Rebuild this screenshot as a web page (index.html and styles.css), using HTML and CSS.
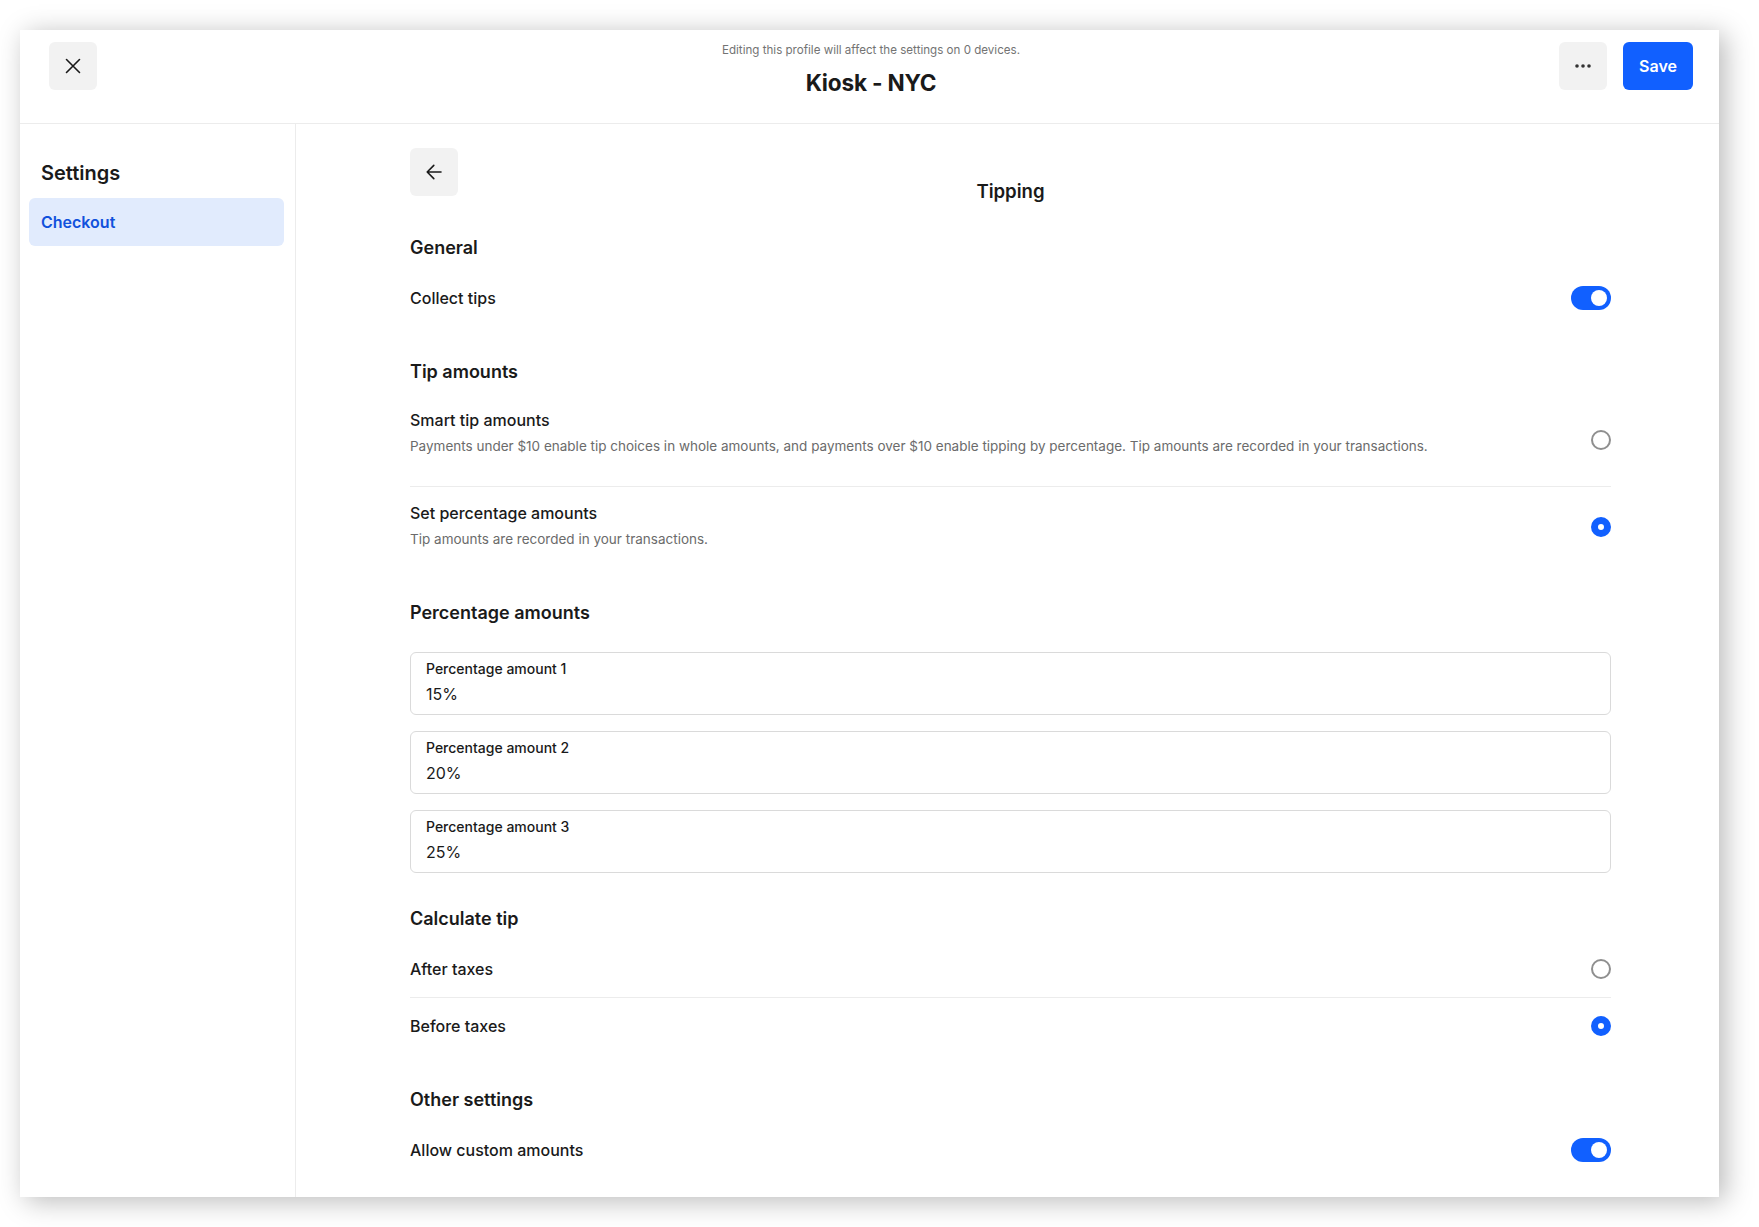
FILE: index.html
```html
<!DOCTYPE html>
<html lang="en">
<head>
  <meta charset="UTF-8" />
  <meta name="viewport" content="width=device-width, initial-scale=1.0"/>
  <title>Kiosk - NYC · Tipping</title>
  <link rel="stylesheet" href="styles.css">
</head>
<body>
  <div class="page">
    <div class="window">
      <header class="topbar">
        <div class="topbar-left">
          <button class="icon-btn" aria-label="Close">
            <svg width="16" height="16" viewBox="0 0 16 16"><path d="M1.5 1.5l13 13M14.5 1.5l-13 13" stroke="#1a1a1a" stroke-width="1.6" fill="none" stroke-linecap="round"/></svg>
          </button>
        </div>
        <div class="topbar-title">
          <div class="topbar-note">Editing this profile will affect the settings on 0 devices.</div>
          <h1>Kiosk - NYC</h1>
        </div>
        <div class="topbar-actions">
          <button class="icon-btn" aria-label="More">
            <svg width="16" height="4" viewBox="0 0 16 4"><circle cx="2" cy="2" r="1.8" fill="#333"/><circle cx="8" cy="2" r="1.8" fill="#333"/><circle cx="14" cy="2" r="1.8" fill="#333"/></svg>
          </button>
          <button class="save-btn">Save</button>
        </div>
      </header>

      <div class="layout">
        <aside class="sidebar">
          <h2>Settings</h2>
          <a class="nav-item active" href="#">Checkout</a>
        </aside>

        <main class="main">
          <div class="page-head">
            <button class="icon-btn" aria-label="Back">
              <svg width="16" height="16" viewBox="0 0 16 16"><path d="M15 8H1.2M7.8 1.4L1.2 8l6.6 6.6" stroke="#1a1a1a" stroke-width="1.6" fill="none" stroke-linecap="round" stroke-linejoin="round"/></svg>
            </button>
            <h2 class="page-title">Tipping</h2>
          </div>

          <section class="group">
            <h3>General</h3>
            <div class="row">
              <span class="row-title">Collect tips</span>
              <span class="toggle on"></span>
            </div>
          </section>

          <section class="group">
            <h3>Tip amounts</h3>
            <div class="row option first">
              <div class="option-text">
                <div class="row-title">Smart tip amounts</div>
                <div class="row-desc">Payments under $10 enable tip choices in whole amounts, and payments over $10 enable tipping by percentage. Tip amounts are recorded in your transactions.</div>
              </div>
              <span class="radio"></span>
            </div>
            <div class="row option">
              <div class="option-text">
                <div class="row-title">Set percentage amounts</div>
                <div class="row-desc">Tip amounts are recorded in your transactions.</div>
              </div>
              <span class="radio checked"></span>
            </div>
          </section>

          <section class="group">
            <h3>Percentage amounts</h3>
            <div class="fields">
              <div class="field">
                <div class="field-label">Percentage amount 1</div>
                <div class="field-value">15%</div>
              </div>
              <div class="field">
                <div class="field-label">Percentage amount 2</div>
                <div class="field-value">20%</div>
              </div>
              <div class="field">
                <div class="field-label">Percentage amount 3</div>
                <div class="field-value">25%</div>
              </div>
            </div>
          </section>

          <section class="group">
            <h3>Calculate tip</h3>
            <div class="row">
              <span class="row-title">After taxes</span>
              <span class="radio"></span>
            </div>
            <div class="row divided">
              <span class="row-title">Before taxes</span>
              <span class="radio checked"></span>
            </div>
          </section>

          <section class="group">
            <h3>Other settings</h3>
            <div class="row">
              <span class="row-title">Allow custom amounts</span>
              <span class="toggle on"></span>
            </div>
          </section>
        </main>
      </div>
    </div>
  </div>
</body>
</html>
```

FILE: styles.css
```css
* { box-sizing: border-box; }
body { margin: 0; background: #fff; font-family: Inter, "Noto Sans", sans-serif; color: #1a1a1a; }
h1, h2, h3 { margin: 0; }
button { font-family: inherit; border: none; cursor: pointer; padding: 0; }

.page { padding: 30px 40px 30px 20px; }
.window {
  height: 1167px;
  background: #fff;
  overflow: hidden;
  box-shadow: 6px 4px 26px rgba(0, 0, 0, 0.28);
}

/* top bar */
.topbar {
  display: grid;
  grid-template-columns: 1fr auto 1fr;
  align-items: start;
  height: 94px;
  padding: 12px 26px 0 29px;
  border-bottom: 1px solid #ececec;
}
.topbar-title { text-align: center; }
.topbar-note { font-size: 11.6px; line-height: 16px; color: #737373; }
.topbar-title h1 { margin-top: 11px; font-size: 22.6px; line-height: 28px; font-weight: 700; letter-spacing: -0.2px; }
.topbar-actions { display: flex; justify-content: flex-end; gap: 16px; }

.icon-btn {
  width: 48px;
  height: 48px;
  border-radius: 6px;
  background: #f2f2f2;
  display: flex;
  align-items: center;
  justify-content: center;
}
.save-btn {
  height: 48px;
  padding: 0 16px;
  border-radius: 6px;
  background: #1160ff;
  color: #fff;
  font-size: 16px;
  font-weight: 600;
}

/* body */
.layout { display: flex; height: 1073px; }
.sidebar {
  width: 276px;
  flex-shrink: 0;
  border-right: 1px solid #ececec;
  padding: 35px 11px 0 9px;
}
.sidebar h2 { font-size: 20px; line-height: 28px; font-weight: 600; padding-left: 12px; margin-bottom: 11px; }
.nav-item {
  display: flex;
  align-items: center;
  height: 48px;
  padding: 0 12px;
  border-radius: 6px;
  font-size: 16px;
  font-weight: 600;
  color: #1151dc;
  text-decoration: none;
}
.nav-item.active { background: #e1ebfd; }

.main { flex: 1; padding: 24px 108px 0 114px; }
.page-head {
  display: grid;
  grid-template-columns: 48px 1fr 48px;
  height: 54px;
}
.page-title { align-self: end; margin-bottom: -1px; text-align: center; font-size: 18.6px; line-height: 24px; font-weight: 600; }

.group { margin-top: 32px; }
.group h3 { font-size: 18px; line-height: 28px; font-weight: 600; margin-bottom: 8px; }

.row {
  display: flex;
  align-items: center;
  justify-content: space-between;
  gap: 24px;
  min-height: 56px;
  padding: 16px 0;
}
.row.divided, .option + .option { border-top: 1px solid #ececec; }
.option { padding: 14px 0 18px; }
.option .radio { margin-top: 4px; }
.option.first .option-text { padding-bottom: 12px; }
.row-title { font-size: 16px; line-height: 24px; font-weight: 500; }
.row-desc { margin-top: 4px; font-size: 13.5px; line-height: 20px; color: #6b6b6b; }

.toggle {
  position: relative;
  width: 40px;
  height: 24px;
  border-radius: 12px;
  background: #c4c4c4;
  flex-shrink: 0;
}
.toggle::after {
  content: "";
  position: absolute;
  top: 4px;
  left: 4px;
  width: 16px;
  height: 16px;
  border-radius: 50%;
  background: #fff;
}
.toggle.on { background: #1160ff; }
.toggle.on::after { left: 20px; }

.radio {
  width: 20px;
  height: 20px;
  border-radius: 50%;
  border: 2px solid #8f8f8f;
  flex-shrink: 0;
}
.radio.checked { border: 7px solid #1160ff; background: #fff; }

.fields { display: flex; flex-direction: column; gap: 16px; margin-top: 25px; }
.field {
  height: 63px;
  border: 1px solid #dadada;
  border-radius: 6px;
  padding: 7px 15px 8px;
}
.field-label { font-size: 14px; line-height: 18px; font-weight: 500; }
.field-value { margin-top: 4px; font-size: 16px; line-height: 24px; }
```
